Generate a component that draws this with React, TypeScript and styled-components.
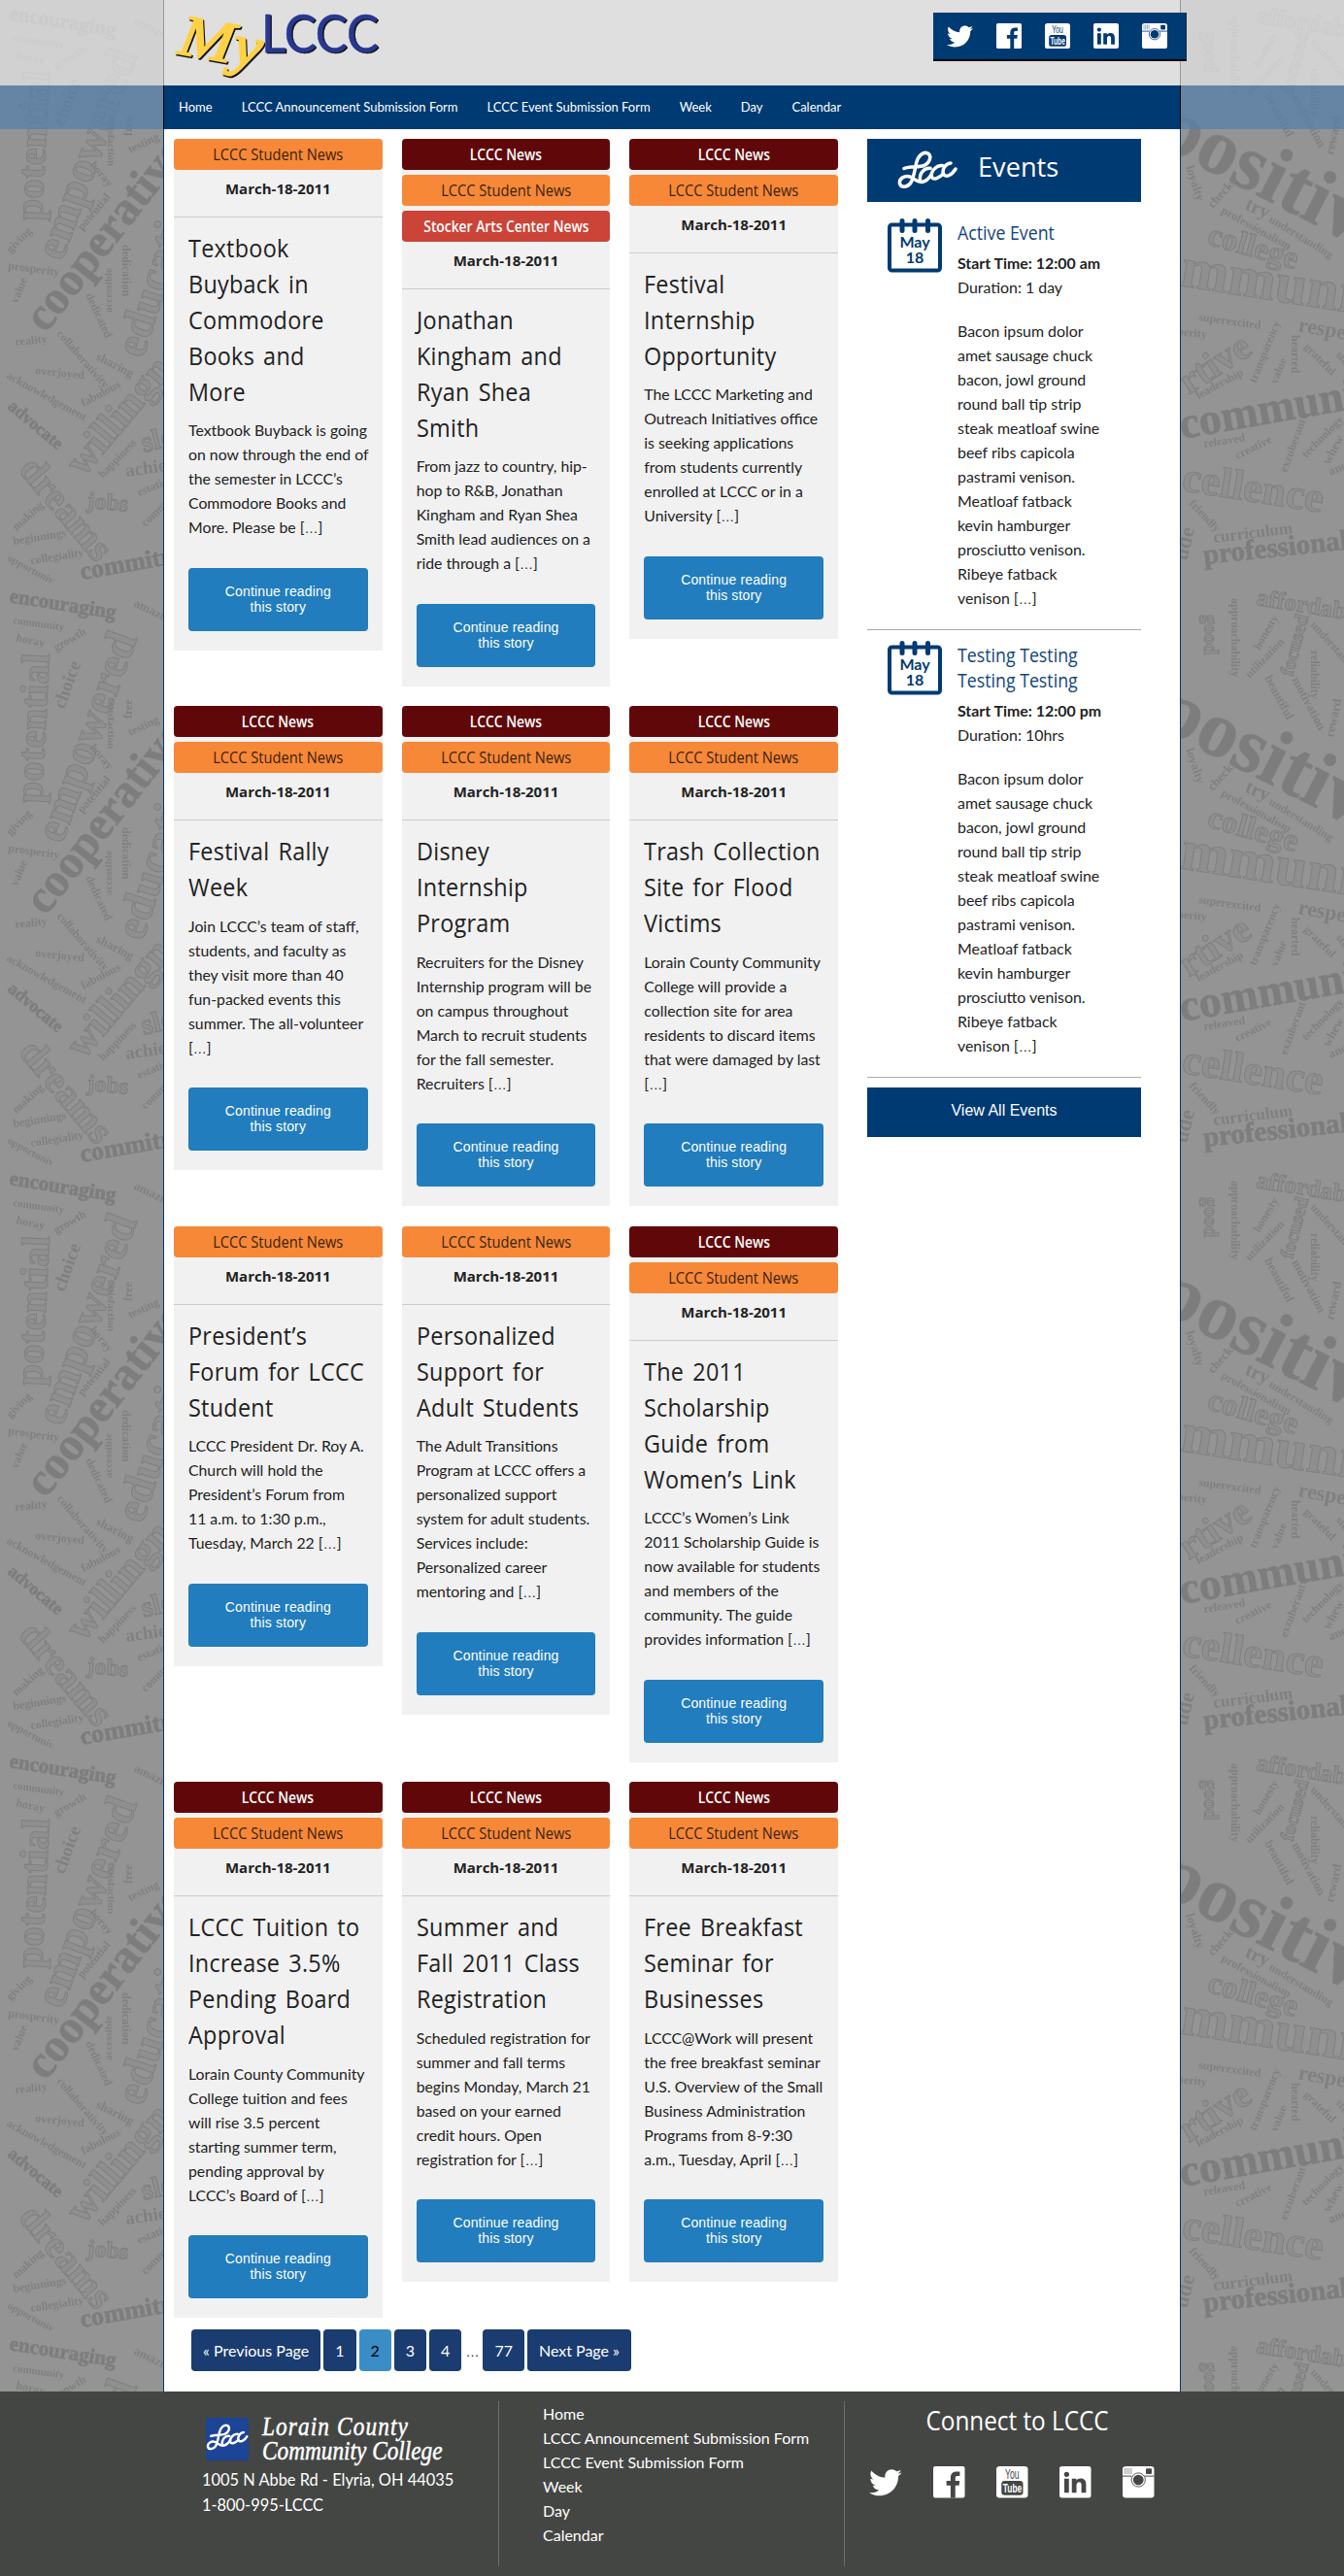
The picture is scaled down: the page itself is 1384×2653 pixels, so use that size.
import React from "react";
import styled, { createGlobalStyle, css } from "styled-components";
import { FaTwitter } from "react-icons/fa";

const NAVY = "#003a73";
const HEAD = '"Open Sans", "Noto Sans", sans-serif';
const BODY = 'Lato, "Liberation Sans", sans-serif';
const ARIAL = '"Liberation Sans", Arial, sans-serif';

const Global = createGlobalStyle`
  *, *::before, *::after { box-sizing: border-box; }
  body { margin: 0; background: #939393; font-family: ${BODY}; color: #222; }
  h1, h2, h3, p, ul { margin: 0; padding: 0; font-weight: 400; }
  ul { list-style: none; }
  a { color: inherit; text-decoration: none; }
`;

/* ---------- word-cloud backdrop ---------- */

type Kind = "s" | "b" | "o";
type Word = [string, number, number, number, number, Kind];

const words: Word[] = [
  ["encouraging", 9, 20, 21, 9, "b"],
  ["community", 13, 42, 11, 8, "s"],
  ["horay", 16, 60, 12, 12, "s"],
  ["growth", 58, 71, 12, -30, "s"],
  ["potential", 43, 228, 41, -87, "o"],
  ["choice", 66, 131, 19, -70, "s"],
  ["empowered", 64, 270, 46, -70, "o"],
  ["satisfaction", 111, 118, 11, 90, "s"],
  ["free", 136, 140, 12, -90, "s"],
  ["testing", 134, 158, 12, -25, "s"],
  ["horay", 92, 170, 12, 50, "s"],
  ["potential", 85, 238, 12, -50, "s"],
  ["cooperative", 47, 344, 48, -52, "b"],
  ["giving", 11, 261, 12, -45, "s"],
  ["prosperity", 8, 277, 12, 8, "s"],
  ["value", 18, 313, 12, -68, "s"],
  ["dedication", 126, 252, 12, 90, "s"],
  ["accessible", 115, 322, 11, -90, "s"],
  ["dedicated", 88, 304, 12, 65, "s"],
  ["education", 147, 370, 46, -72, "o"],
  ["reality", 16, 356, 12, -6, "s"],
  ["collaborativity", 58, 344, 12, 49, "s"],
  ["sharing", 98, 370, 13, 27, "s"],
  ["overjoyed", 36, 385, 12, 6, "s"],
  ["acknowledgement", 6, 389, 12, 29, "s"],
  ["fabulous", 86, 419, 12, -28, "s"],
  ["advocate", 7, 420, 18, 40, "b"],
  ["willingness", 86, 492, 42, -50, "o"],
  ["slow", 148, 466, 30, -14, "o"],
  ["happiness", 106, 493, 12, -46, "s"],
  ["achieve", 130, 491, 19, -8, "s"],
  ["jobs", 89, 523, 24, 5, "o"],
  ["dreams", 18, 484, 40, 50, "o"],
  ["estatic", 143, 511, 12, -22, "s"],
  ["making", 17, 547, 12, -42, "s"],
  ["beginnings", 14, 561, 12, -9, "s"],
  ["collegiality", 32, 581, 12, -9, "s"],
  ["opportuniy", 7, 577, 11, 28, "s"],
  ["commitment", 84, 597, 26, -10, "b"],
  ["community", 150, 543, 12, -45, "s"],
  ["amazing", 137, 24, 13, 26, "s"],
  ["affordable", 1293, 23, 25, 9, "o"],
  ["good", 1240, 33, 20, 90, "o"],
  ["approachability", 1268, 16, 12, 90, "s"],
  ["honesty", 1297, 70, 12, -60, "s"],
  ["focused", 1331, 97, 20, -75, "o"],
  ["utilization", 1287, 99, 12, -46, "s"],
  ["reliability", 1350, 70, 12, 90, "s"],
  ["understanding", 1349, 44, 12, 48, "s"],
  ["beautiful", 1302, 98, 13, 62, "s"],
  ["motivation", 1330, 100, 13, 62, "s"],
  ["reward", 1373, 160, 13, -78, "s"],
  ["positive", 1186, 146, 82, 27, "b"],
  ["loyalty", 1221, 172, 13, 72, "s"],
  ["checks", 1249, 215, 13, -48, "s"],
  ["try", 1281, 215, 20, 24, "s"],
  ["professionalism", 1257, 219, 12, 29, "s"],
  ["understanding", 1306, 228, 12, 31, "s"],
  ["college", 1242, 251, 33, 16, "o"],
  ["mmunity", 1214, 294, 59, 9, "o"],
  ["superexcited", 1234, 330, 12, 8, "s"],
  ["respect", 1336, 341, 22, 10, "s"],
  ["perity", 1212, 345, 12, 6, "s"],
  ["rtive", 1224, 407, 40, -33, "o"],
  ["transparency", 1293, 395, 12, -68, "s"],
  ["hearted", 1330, 345, 12, 90, "s"],
  ["grateful", 1342, 358, 12, 45, "s"],
  ["value", 1315, 396, 12, -68, "s"],
  ["story", 1375, 366, 12, 50, "s"],
  ["leadership", 1234, 411, 12, -28, "s"],
  ["community", 1217, 452, 46, -10, "b"],
  ["releaved", 1240, 461, 12, -9, "s"],
  ["creative", 1274, 473, 12, -26, "s"],
  ["exzuberant", 1325, 487, 12, -70, "s"],
  ["technology", 1345, 472, 12, -45, "s"],
  ["whew", 1369, 479, 13, -62, "s"],
  ["anchor", 1370, 490, 13, -24, "s"],
  ["cellence", 1216, 505, 44, 9, "o"],
  ["friendly", 1224, 519, 12, 47, "s"],
  ["curriculum", 1250, 559, 17, -7, "s"],
  ["professional", 1240, 581, 29, -6, "b"],
  ["ude", 1222, 578, 22, -76, "s"],
];

const wordFill: Record<Kind, string> = { s: "#808080", b: "#7d7d7d", o: "#8f8f8f" };

const BackdropSvg = styled.svg`
  position: absolute;
  inset: 0;
  width: 100%;
  height: 100%;
  font-family: "Liberation Serif", serif;
  font-weight: 700;
`;

function Backdrop() {
  return (
    <BackdropSvg aria-hidden="true">
      <defs>
        <pattern id="cloud" width="1384" height="600" patternUnits="userSpaceOnUse">
          <rect width="1384" height="600" fill="#949494" />
          {words.map(([t, x, y, size, rot, kind], i) => (
            <text
              key={i}
              transform={`translate(${x} ${y}) rotate(${rot})`}
              fontSize={size}
              fill={wordFill[kind]}
              stroke={kind === "s" ? "none" : "#7f7f7f"}
              strokeWidth={kind === "o" ? 1 : 0.8}
            >
              {t}
            </text>
          ))}
        </pattern>
      </defs>
      <rect width="100%" height="100%" fill="url(#cloud)" />
    </BackdropSvg>
  );
}

/* ---------- icons and logos ---------- */

const IconSvg = styled.svg<{ $w: number }>`
  display: block;
  width: ${(p) => p.$w}px;
  height: ${(p) => p.$w}px;
  overflow: visible;
`;

type IconProps = { size: number; back: string };

const TwitterBird = styled(FaTwitter)<{ $w: number }>`
  display: block;
  width: ${(p) => p.$w}px;
  height: ${(p) => p.$w}px;
`;

function FacebookIcon({ size, back }: IconProps) {
  return (
    <IconSvg $w={size} viewBox="0 0 26 26">
      <rect width="26" height="26" rx="1.6" fill="#fff" />
      <path
        fill={back}
        d="M14.3 26V15.8H10.9V12h3.4V9.4c0-3.4 2-5 5-5h2.6v3.7h-2c-1.3 0-1.7.6-1.7 1.8V12h3.6l-.5 3.8h-3.1V26z"
      />
    </IconSvg>
  );
}

function YoutubeIcon({ size, back }: IconProps) {
  return (
    <IconSvg $w={size} viewBox="0 0 26 26" fontFamily="Liberation Sans" fontWeight="700">
      <rect width="26" height="26" rx="2.6" fill="#fff" />
      <rect x="4.2" y="12" width="17.8" height="11.8" rx="2.6" fill={back} />
      <text x="7.2" y="10.4" fontSize="11" fontWeight="400" fill={back} textLength="11.6" lengthAdjust="spacingAndGlyphs">
        You
      </text>
      <text x="5.4" y="21.8" fontSize="10.500" fill="#fff" textLength="15.6" lengthAdjust="spacingAndGlyphs">
        Tube
      </text>
    </IconSvg>
  );
}

function LinkedinIcon({ size, back }: IconProps) {
  return (
    <IconSvg $w={size} viewBox="0 0 26 26">
      <rect width="26" height="26" rx="2" fill="#fff" />
      <circle cx="5.9" cy="6.6" r="2.1" fill={back} />
      <path fill={back} d="M4 10.2h3.8v11.6H4zM10.2 10.2h3.7v1.6c.8-1.3 2-1.9 3.6-1.9 3 0 4.4 1.8 4.4 5v6.9h-3.8v-6.3c0-1.6-.6-2.5-1.9-2.5-1.4 0-2.2 1-2.2 2.6v6.2h-3.8z" />
    </IconSvg>
  );
}

function InstagramIcon({ size, back }: IconProps) {
  return (
    <IconSvg $w={size} viewBox="0 0 26 26">
      <rect width="26" height="26" rx="2.6" fill="#fff" />
      <rect x="19.2" y="1.8" width="4.8" height="4.6" rx="0.8" fill={back} />
      <path d="M2 1.5v5M3.7 1.3v5.2M5.4 1.3v5.2M7.1 1.3v5.2" stroke={back} strokeWidth="0.6" opacity="0.7" />
      <path d="M0 8.1h7.6M18 8.1h8" stroke={back} strokeWidth="0.8" />
      <circle cx="13" cy="11.2" r="5.7" fill="#fff" stroke={back} strokeWidth="0.7" />
      <circle cx="13" cy="11.2" r="4.3" fill={back} />
    </IconSvg>
  );
}

const MarkSvg = styled.svg<{ $w: number; $h: number }>`
  display: block;
  flex: none;
  width: ${(p) => p.$w}px;
  height: ${(p) => p.$h}px;
`;

/* Looping ribbon emblem: a tall loop, a tail loop and three open curls. */
function Ribbon({ w, h }: { w: number; h: number }) {
  return (
    <MarkSvg $w={w} $h={h} viewBox="0 0 62 40" fill="none" stroke="#fff" strokeWidth="3.5" strokeLinecap="round" strokeLinejoin="round">
      <path d="M7 18.500C13 16 22 17.500 27.500 15.500C34 12.500 35.500 5.500 31.500 3C27 0.800 21.500 5 19.500 13C18 20 17 28 14 33C11 38 4 39 2.500 34C1.500 28.500 8 25.500 13 27C18 28.500 20 33 25 32.500C29.500 32 32.500 29 35 25" />
      <path d="M34 18.300C27.500 17.500 22.500 24 23.500 30.500" />
      <path d="M46.500 15.500C40 14.800 34 22 35.500 27C37 31 43.500 28.500 47.500 23.500" />
      <path d="M55 13C49 13.500 46 20 47.500 24.300C50 28.500 56.500 25 60 19" />
    </MarkSvg>
  );
}

const CalSvg = styled.svg`
  position: absolute;
  inset: 0;
  width: 56px;
  height: 56px;
`;

const CalBox = styled.div`
  position: relative;
  flex: none;
  width: 56px;
  height: 56px;
  padding-top: 16px;
  text-align: center;
  font: 700 16px/16px ${BODY};
  color: ${NAVY};
  margin: 0 16px 0 21px;
`;

function CalendarBadge({ month, day }: { month: string; day: string }) {
  return (
    <CalBox>
      <CalSvg viewBox="0 0 56 56">
        <rect x="2" y="6.500" width="52" height="47" rx="2.500" fill="none" stroke={NAVY} strokeWidth="4" />
        <path d="M15 2.500v10M28 2.500v10M41.500 2.500v10" stroke={NAVY} strokeWidth="5" strokeLinecap="round" />
      </CalSvg>
      {month}
      <br />
      {day}
    </CalBox>
  );
}

/* ---------- layout ---------- */

const Page = styled.div`
  position: relative;
  display: flex;
  flex-direction: column;
  width: 1384px;
  height: 2653px;
  overflow: hidden;
`;

const Band = styled.div<{ $bg: string; $h: number }>`
  position: relative;
  display: flex;
  justify-content: center;
  height: ${(p) => p.$h}px;
  background: ${(p) => p.$bg};
`;

const HeaderInner = styled.header`
  display: flex;
  justify-content: space-between;
  align-items: flex-start;
  width: 1048px;
  padding: 13px 0 0 9px;
  background: #dfdfdf;
  border: solid #999;
  border-width: 0 1px;
`;

const SiteLogo = styled.svg`
  display: block;
  width: 220px;
  height: 75px;
  overflow: visible;
`;

const SocialBar = styled.div`
  display: flex;
  align-items: flex-start;
  gap: 24px;
  width: 261px;
  height: 50px;
  margin-right: -7px;
  padding: 11px 0 0 14px;
  background: ${NAVY};
  border-bottom: 2px solid #000;
  border-right: 1px solid #1a2c40;
  color: #fff;
`;

const NavInner = styled.nav`
  display: flex;
  align-items: center;
  gap: 30px;
  width: 1048px;
  padding: 0 0 1px 15px;
  background: ${NAVY};
  border: solid #000;
  border-width: 0 1px;
  color: #fff;
  font: 400 13px/20px ${BODY};
`;

const Body = styled.main`
  position: relative;
  flex: 1;
  display: flex;
  align-items: flex-start;
  width: 1048px;
  margin: 0 auto;
  padding: 10px 0 0 10px;
  background: #fff;
  border: solid ${NAVY};
  border-width: 0 1px;
`;

const Main = styled.div`
  width: 684px;
`;

const CardGrid = styled.div`
  display: grid;
  grid-template-columns: repeat(3, minmax(0, 1fr));
  align-items: start;
  gap: 20.4px 20px;
`;

const Card = styled.article`
  background: #f1f1f1;
  padding-bottom: 20px;
`;

type TagKind = "news" | "student" | "stocker";

const tagLook = {
  news: css`background: #600809; color: #fff; font-weight: 600;`,
  student: css`background: #f78838; color: #38230f;`,
  stocker: css`background: #cb4437; color: #fff; font-weight: 600;`,
};

const Tag = styled.div<{ $kind: TagKind }>`
  height: 32px;
  margin-bottom: 5px;
  border-radius: 4px;
  text-align: center;
  white-space: nowrap;
  font: 400 16px/32px ${HEAD};
  ${(p) => tagLook[p.$kind]}
`;

const Narrow = styled.span<{ $x: number }>`
  display: inline-block;
  transform: scaleX(${(p) => p.$x});
`;

const DateLine = styled.div`
  height: 44px;
  padding-top: 2px;
  border-bottom: 1px solid #ccc;
  text-align: center;
  font: 700 15px/25px ${HEAD};
`;

const CardBody = styled.div`
  padding: 13px 15px 0;
`;

const CardTitle = styled.h2`
  font: 400 26px/37px ${HEAD};
  letter-spacing: 0.3px;
  word-spacing: 3px;
  white-space: nowrap;
  transform: scaleX(0.9);
  transform-origin: left;
`;

const Excerpt = styled.p`
  margin-top: 8.4px;
  font: 400 15.8px/25px ${BODY};
  white-space: nowrap;
`;

const ReadMore = styled.a`
  display: block;
  height: 65px;
  margin-top: 29.6px;
  padding: 16px 30px 0;
  border-radius: 4px;
  background: #217dbd;
  color: #fff;
  text-align: center;
  font: 400 14px/16px ${ARIAL};
  letter-spacing: 0.15px;
`;

const Pager = styled.div`
  display: flex;
  align-items: flex-start;
  gap: 3px;
  margin-top: 11.8px;
  padding-left: 18px;
  font: 400 16px/25px ${BODY};
`;

const PageLink = styled.a<{ $current?: boolean }>`
  height: 43px;
  padding: 9px 12px 0;
  border-radius: 4px;
  white-space: nowrap;
  background: ${(p) => (p.$current ? "#3b8dc6" : "#1b3c70")};
  color: ${(p) => (p.$current ? "#000" : "#fff")};
`;

const Dots = styled.span`
  width: 16px;
  padding: 9px 0 0 1px;
`;

const WideDots = styled.span`
  font-family: ${ARIAL};
  font-size: 14px;
  line-height: 1;
`;

const Sidebar = styled.aside`
  width: 282px;
  margin-left: 30px;
`;

const EventsHead = styled.div`
  display: flex;
  align-items: center;
  height: 65px;
  padding: 0 0 2px 31px;
  background: ${NAVY};
  color: #fff;
`;

const EventsTitle = styled.h2`
  margin: -8px 0 0 21px;
  font: 400 28px/40px ${HEAD};
  transform: scaleX(0.97);
  transform-origin: left;
`;

const EventItem = styled.div<{ $first?: boolean }>`
  display: flex;
  align-items: flex-start;
  padding: ${(p) => (p.$first ? 17 : 11)}px 0 20.1px;
  border-bottom: 1px solid #aaa;
`;

const EventTitle = styled.h3`
  margin: 2px 0 6px;
  font: 400 19.500px/25.3px ${HEAD};
  color: #10457b;
  white-space: nowrap;
  transform: scaleX(0.91);
  transform-origin: left;
`;

const EventText = styled.p<{ $gap?: boolean; $bold?: boolean }>`
  font: ${(p) => (p.$bold ? 700 : 400)} 15.9px/25px ${BODY};
  white-space: nowrap;
  margin-top: ${(p) => (p.$gap ? 20 : 0)}px;
`;

const AllEvents = styled.a`
  display: block;
  height: 51px;
  margin-top: 10px;
  background: ${NAVY};
  color: #fff;
  text-align: center;
  font: 400 16px/48px ${ARIAL};
`;

const Footer = styled.footer`
  position: relative;
  display: flex;
  height: 190px;
  padding: 10px 168px;
  background: #444644;
  color: #fff;
`;

const FootCol = styled.div<{ $w: number; $line?: boolean }>`
  width: ${(p) => p.$w}px;
  height: 170px;
  border-right: ${(p) => (p.$line ? "1px solid #6c6e6c" : "none")};
`;

const Brand = styled.div`
  display: flex;
  padding: 17px 0 0 44px;
`;

const BrandSquare = styled.div`
  display: flex;
  align-items: center;
  justify-content: center;
  width: 44px;
  height: 44px;
  padding-bottom: 4px;
  background: #1c4497;
`;

const BrandName = styled.div`
  margin: -3px 0 0 14px;
  font: italic 400 27px/25px "Liberation Serif", serif;
  white-space: nowrap;
  -webkit-text-stroke: 0.5px #fff;
  transform: scaleX(0.862);
  transform-origin: left;
`;

const BrandLine = styled.div<{ $track: number }>`
  letter-spacing: ${(p) => p.$track}px;
`;

const Address = styled.p`
  margin: 4px 0 0 40px;
  font: 400 16.4px/26px ${BODY};
  white-space: nowrap;
`;

const FootLinks = styled.ul`
  padding: 0 0 0 45px;
  font: 400 16px/25px ${BODY};
  white-space: nowrap;
`;

const Connect = styled.h2`
  margin: 3px 0 30px;
  padding-left: 10px;
  text-align: center;
  font: 400 27px/34px ${HEAD};
`;

const FootIcons = styled.div`
  display: flex;
  gap: 32.500px;
  padding-left: 25px;
`;

/* ---------- data ---------- */

type CardData = { tags: TagKind[]; title: string[]; text: string[] };

const tagText: Record<TagKind, string> = {
  news: "LCCC News",
  student: "LCCC Student News",
  stocker: "Stocker Arts Center News",
};

const tagScale: Record<TagKind, number> = { news: 0.865, student: 0.915, stocker: 0.865 };

const cards: CardData[] = [
  {
    tags: ["student"],
    title: ["Textbook", "Buyback in", "Commodore", "Books and", "More"],
    text: ["Textbook Buyback is going", "on now through the end of", "the semester in LCCC’s", "Commodore Books and", "More. Please be […]"],
  },
  {
    tags: ["news", "student", "stocker"],
    title: ["Jonathan", "Kingham and", "Ryan Shea", "Smith"],
    text: ["From jazz to country, hip-", "hop to R&B, Jonathan", "Kingham and Ryan Shea", "Smith lead audiences on a", "ride through a […]"],
  },
  {
    tags: ["news", "student"],
    title: ["Festival", "Internship", "Opportunity"],
    text: ["The LCCC Marketing and", "Outreach Initiatives office", "is seeking applications", "from students currently", "enrolled at LCCC or in a", "University […]"],
  },
  {
    tags: ["news", "student"],
    title: ["Festival Rally", "Week"],
    text: ["Join LCCC’s team of staff,", "students, and faculty as", "they visit more than 40", "fun-packed events this", "summer. The all-volunteer", "[…]"],
  },
  {
    tags: ["news", "student"],
    title: ["Disney", "Internship", "Program"],
    text: ["Recruiters for the Disney", "Internship program will be", "on campus throughout", "March to recruit students", "for the fall semester.", "Recruiters […]"],
  },
  {
    tags: ["news", "student"],
    title: ["Trash Collection", "Site for Flood", "Victims"],
    text: ["Lorain County Community", "College will provide a", "collection site for area", "residents to discard items", "that were damaged by last", "[…]"],
  },
  {
    tags: ["student"],
    title: ["President’s", "Forum for LCCC", "Student"],
    text: ["LCCC President Dr. Roy A.", "Church will hold the", "President’s Forum from", "11 a.m. to 1:30 p.m.,", "Tuesday, March 22 […]"],
  },
  {
    tags: ["student"],
    title: ["Personalized", "Support for", "Adult Students"],
    text: ["The Adult Transitions", "Program at LCCC offers a", "personalized support", "system for adult students.", "Services include:", "Personalized career", "mentoring and […]"],
  },
  {
    tags: ["news", "student"],
    title: ["The 2011", "Scholarship", "Guide from", "Women’s Link"],
    text: ["LCCC’s Women’s Link", "2011 Scholarship Guide is", "now available for students", "and members of the", "community. The guide", "provides information […]"],
  },
  {
    tags: ["news", "student"],
    title: ["LCCC Tuition to", "Increase 3.5%", "Pending Board", "Approval"],
    text: ["Lorain County Community", "College tuition and fees", "will rise 3.5 percent", "starting summer term,", "pending approval by", "LCCC’s Board of […]"],
  },
  {
    tags: ["news", "student"],
    title: ["Summer and", "Fall 2011 Class", "Registration"],
    text: ["Scheduled registration for", "summer and fall terms", "begins Monday, March 21", "based on your earned", "credit hours. Open", "registration for […]"],
  },
  {
    tags: ["news", "student"],
    title: ["Free Breakfast", "Seminar for", "Businesses"],
    text: ["LCCC@Work will present", "the free breakfast seminar", "U.S. Overview of the Small", "Business Administration", "Programs from 8-9:30", "a.m., Tuesday, April […]"],
  },
];

const menu = ["Home", "LCCC Announcement Submission Form", "LCCC Event Submission Form", "Week", "Day", "Calendar"];

const bacon = [
  "Bacon ipsum dolor", "amet sausage chuck", "bacon, jowl ground", "round ball tip strip",
  "steak meatloaf swine", "beef ribs capicola", "pastrami venison.", "Meatloaf fatback",
  "kevin hamburger", "prosciutto venison.", "Ribeye fatback", "venison […]",
];

const events = [
  { title: ["Active Event"], start: "12:00 am", duration: "1 day" },
  { title: ["Testing Testing", "Testing Testing"], start: "12:00 pm", duration: "10hrs" },
];

function Lines({ items }: { items: string[] }) {
  return (
    <>
      {items.map((line, i) => {
        const [before, after] = line.split("…");
        return (
          <React.Fragment key={i}>
            {i > 0 && <br />}
            {before}
            {after !== undefined && <WideDots>…</WideDots>}
            {after}
          </React.Fragment>
        );
      })}
    </>
  );
}

function SocialIcons({ size, back }: IconProps) {
  return (
    <>
      <TwitterBird $w={size + 1} />
      <FacebookIcon size={size} back={back} />
      <YoutubeIcon size={size} back={back} />
      <LinkedinIcon size={size} back={back} />
      <InstagramIcon size={size} back={back} />
    </>
  );
}

export default function App() {
  return (
    <Page>
      <Global />
      <Backdrop />
      <Band $bg="rgba(233, 233, 233, 0.72)" $h={88}>
        <HeaderInner>
          <SiteLogo viewBox="178 13 220 75">
            <g fontFamily="Liberation Serif" fontStyle="italic" fontSize="60" strokeWidth="1.8" transform="translate(182 55) rotate(10)">
              <text x="1.500" y="1.500" fill="#111" stroke="#111" textLength="86" lengthAdjust="spacingAndGlyphs">My</text>
              <text fill="#ffd145" stroke="#ffd145" textLength="86" lengthAdjust="spacingAndGlyphs">My</text>
            </g>
            <g fontFamily="Lato" fontSize="54" strokeWidth="0.500">
              <text x="270.500" y="55.300" fill="#111" stroke="#111" textLength="121" lengthAdjust="spacingAndGlyphs">LCCC</text>
              <text x="269" y="53.800" fill="#283891" stroke="#283891" textLength="121" lengthAdjust="spacingAndGlyphs">LCCC</text>
            </g>
          </SiteLogo>
          <SocialBar>
            <SocialIcons size={26} back={NAVY} />
          </SocialBar>
        </HeaderInner>
      </Band>
      <Band $bg="rgba(84, 127, 171, 0.72)" $h={45}>
        <NavInner>
          {menu.map((m) => (
            <a key={m} href="#">{m}</a>
          ))}
        </NavInner>
      </Band>
      <Body>
        <Main>
          <CardGrid>
            {cards.map((c) => (
              <Card key={c.title.join(" ")}>
                {c.tags.map((k) => (
                  <Tag key={k} $kind={k}>
                    <Narrow $x={tagScale[k]}>{tagText[k]}</Narrow>
                  </Tag>
                ))}
                <DateLine>March-18-2011</DateLine>
                <CardBody>
                  <CardTitle><Lines items={c.title} /></CardTitle>
                  <Excerpt><Lines items={c.text} /></Excerpt>
                  <ReadMore href="#">Continue reading this story</ReadMore>
                </CardBody>
              </Card>
            ))}
          </CardGrid>
          <Pager>
            <PageLink href="#">« Previous Page</PageLink>
            <PageLink href="#">1</PageLink>
            <PageLink href="#" $current>2</PageLink>
            <PageLink href="#">3</PageLink>
            <PageLink href="#">4</PageLink>
            <Dots><WideDots>…</WideDots></Dots>
            <PageLink href="#">77</PageLink>
            <PageLink href="#">Next Page »</PageLink>
          </Pager>
        </Main>
        <Sidebar>
          <EventsHead>
            <Ribbon w={62} h={40} />
            <EventsTitle>Events</EventsTitle>
          </EventsHead>
          {events.map((e, i) => (
            <EventItem key={i} $first={i === 0}>
              <CalendarBadge month="May" day="18" />
              <div>
                <EventTitle><Lines items={e.title} /></EventTitle>
                <EventText $bold>Start Time: {e.start}</EventText>
                <EventText>Duration: {e.duration}</EventText>
                <EventText $gap><Lines items={bacon} /></EventText>
              </div>
            </EventItem>
          ))}
          <AllEvents href="#">View All Events</AllEvents>
        </Sidebar>
      </Body>
      <Footer>
        <FootCol $w={346} $line>
          <Brand>
            <BrandSquare><Ribbon w={44} h={28} /></BrandSquare>
            <BrandName>
              <BrandLine $track={1.3}>Lorain County</BrandLine>
              <BrandLine $track={0}>Community College</BrandLine>
            </BrandName>
          </Brand>
          <Address>1005 N Abbe Rd - Elyria, OH 44035<br />1-800-995-LCCC</Address>
        </FootCol>
        <FootCol $w={356} $line>
          <FootLinks>
            {menu.map((m) => (
              <li key={m}><a href="#">{m}</a></li>
            ))}
          </FootLinks>
        </FootCol>
        <FootCol $w={346}>
          <Connect><Narrow $x={0.9}>Connect to LCCC</Narrow></Connect>
          <FootIcons>
            <SocialIcons size={32.5} back="#444644" />
          </FootIcons>
        </FootCol>
      </Footer>
    </Page>
  );
}
